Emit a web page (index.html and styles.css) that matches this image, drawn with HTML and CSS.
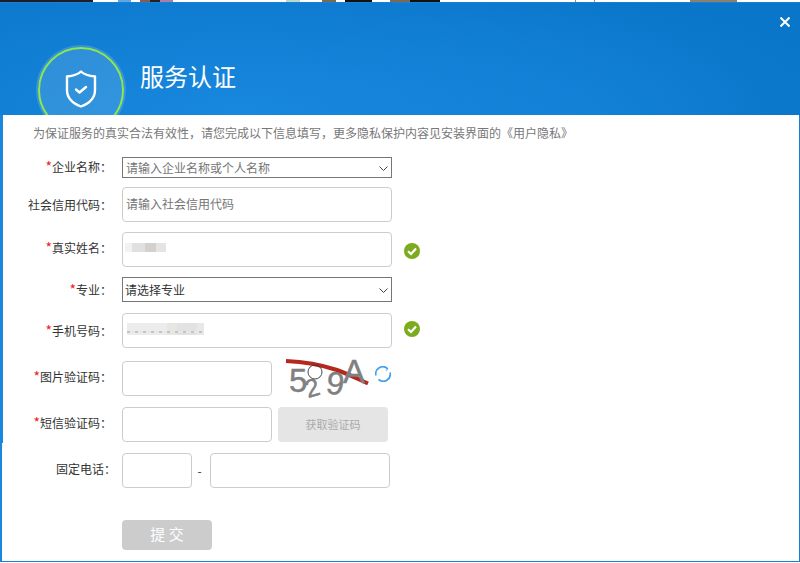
FILE: index.html
```html
<!DOCTYPE html>
<html lang="zh-CN">
<head>
<meta charset="utf-8">
<title>服务认证</title>
<link rel="stylesheet" href="styles.css">
</head>
<body>
<div class="strip"></div>
<main class="window">
  <header class="head">
    <div class="badge">
      <svg class="shield" viewBox="0 0 34 40" width="34" height="40" aria-hidden="true">
        <path d="M17 2.500 C14 5.500 9 7 3 7.500 V21 C3 29 9 34.500 17 37.500 C25 34.500 31 29 31 21 V7.500 C25 7 20 5.500 17 2.500 Z" fill="none" stroke="#fff" stroke-width="2.400" stroke-linejoin="round"/>
        <path d="M12 20.500 L15.500 23.500 L22 18" fill="none" stroke="#fff" stroke-width="2.400" stroke-linecap="round" stroke-linejoin="round"/>
      </svg>
    </div>
    <h1 class="title">服务认证</h1>
    <svg class="close" viewBox="0 0 10 10" width="10" height="10" aria-hidden="true">
      <path d="M0.500 0.500 L9.500 9.500 M9.500 0.500 L0.500 9.500" stroke="#fff" stroke-width="2" fill="none"/>
    </svg>
  </header>
  <section class="content">
    <p class="intro">为保证服务的真实合法有效性，请您完成以下信息填写，更多隐私保护内容见安装界面的《用户隐私》</p>
    <form class="form">
      <div class="row gap-9">
        <label class="label up-1"><em>*</em>企业名称：</label>
        <div class="select-wrap">
          <select class="select select-short select-muted"><option>请输入企业名称或个人名称</option></select>
          <svg class="chevron" viewBox="0 0 9 5" width="9" height="5" aria-hidden="true"><path d="M0.500 0.500 L4.500 4.500 L8.500 0.500" fill="none" stroke="#444" stroke-width="1"/></svg>
        </div>
      </div>
      <div class="row">
        <label class="label">社会信用代码：</label>
        <input class="input wide input-raised" placeholder="请输入社会信用代码">
      </div>
      <div class="row">
        <label class="label up-2"><em>*</em>真实姓名：</label>
        <div class="field">
          <input class="input wide">
          <span class="blur blur-name"></span>
        </div>
        <svg class="ok ok-down" viewBox="0 0 16 16" width="16" height="16" aria-hidden="true"><circle cx="8" cy="8" r="8" fill="#7dab1f"/><path d="M4 8.200 L7 11 L12 5.500" fill="none" stroke="#fff" stroke-width="2.200"/></svg>
      </div>
      <div class="row gap-11">
        <label class="label"><em>*</em>专业：</label>
        <div class="select-wrap">
          <select class="select select-tall"><option>请选择专业</option></select>
          <svg class="chevron" viewBox="0 0 9 5" width="9" height="5" aria-hidden="true"><path d="M0.500 0.500 L4.500 4.500 L8.500 0.500" fill="none" stroke="#444" stroke-width="1"/></svg>
        </div>
      </div>
      <div class="row gap-13">
        <label class="label"><em>*</em>手机号码：</label>
        <div class="field">
          <input class="input wide">
          <span class="blur blur-phone"></span>
        </div>
        <svg class="ok ok-up" viewBox="0 0 16 16" width="16" height="16" aria-hidden="true"><circle cx="8" cy="8" r="8" fill="#7dab1f"/><path d="M4 8.200 L7 11 L12 5.500" fill="none" stroke="#fff" stroke-width="2.200"/></svg>
      </div>
      <div class="row gap-11">
        <label class="label up-3"><em>*</em>图片验证码：</label>
        <input class="input mid">
        <svg class="captcha" viewBox="0 0 82 41" width="82" height="41" aria-label="验证码图片">
          <path d="M0 3 C14 3.500 30 5 51 12 C62 16 72 21 82 25.500" fill="none" stroke="#b5281d" stroke-width="4"/>
          <text x="3" y="34" class="cap-char cap-5">5</text>
          <text x="0" y="0" class="cap-char cap-two" transform="translate(22 40) rotate(-16)">2</text>
          <text x="0" y="0" class="cap-char cap-nine" transform="translate(39 35) rotate(8)">9</text>
          <text x="0" y="0" class="cap-char cap-a" transform="translate(57 25)">A</text>
          <circle cx="29" cy="14" r="7" fill="none" stroke="#333" stroke-width="0.900"/>
        </svg>
        <svg class="refresh" viewBox="0 0 16 16" width="16" height="16" aria-hidden="true">
          <path d="M1 9.500 A7 7 0 0 1 12.500 2.600 M15 6.500 A7 7 0 0 1 3.500 13.400" fill="none" stroke="#3f9ff0" stroke-width="1.600"/>
          <path d="M10.500 0.800 L12.800 2.800 L11 4.800" fill="none" stroke="#3f9ff0" stroke-width="1"/>
        </svg>
      </div>
      <div class="row gap-11">
        <label class="label up-2"><em>*</em>短信验证码：</label>
        <input class="input mid">
        <button type="button" class="sms" disabled>获取验证码</button>
      </div>
      <div class="row gap-32">
        <label class="label label-shift up-3">固定电话：</label>
        <input class="input area">
        <span class="dash">-</span>
        <input class="input phone">
      </div>
      <div class="row">
        <span class="label"></span>
        <button type="button" class="submit" disabled>提 交</button>
      </div>
    </form>
  </section>
</main>
</body>
</html>
```

FILE: styles.css
```css
* { box-sizing: border-box; }
html, body { margin: 0; height: 563px; overflow: hidden; background: #fff; }
body { font-family: "Noto Sans CJK SC", "Liberation Sans", sans-serif; font-size: 12px; color: #333; }

.strip {
  height: 2px;
  background: linear-gradient(90deg,
    #1b1f28 0 93px, #fff 93px 118px, #5ba8e8 118px 131px, #fff 131px 140px,
    #8a5a50 140px 150px, #222 150px 160px, #a87fa8 160px 173px, #fff 173px 286px,
    #b8d8d0 286px 300px, #fff 300px 322px, #7a6a50 322px 336px, #fff 336px 345px,
    #111 345px 372px, #fff 372px 390px, #7a6a50 390px 410px, #111 410px 440px,
    #fff 440px 575px, #b08a60 575px 576px, #fff 576px 594px, #b08a60 594px 595px,
    #fff 595px 690px, #8a8070 690px 737px, #fff 737px);
}

.window {
  height: 560px;
  border-right: 1px solid #1a7fd0;
  border-bottom: 1px solid #1a7fd0;
  border-left: 2px solid #1a86dc;
  display: flex;
  flex-direction: column;
}

.head {
  position: relative;
  height: 113px;
  margin-left: -2px;
  margin-right: -1px;
  flex: none;
  overflow: hidden;
  display: flex;
  align-items: flex-start;
  padding: 44px 0 0 38px;
  border-top: 1px solid #1a80d6;
  background:
    radial-gradient(ellipse 520px 170px at 240px 113px, #1888de 0%, rgba(24, 136, 222, 0) 100%),
    radial-gradient(ellipse 300px 120px at 560px 113px, rgba(24, 136, 222, 0.45) 0%, rgba(24, 136, 222, 0) 100%),
    #0a76ca;
}

.badge {
  width: 86px;
  height: 86px;
  flex: none;
  border-radius: 50%;
  border: 2px solid #8ce84c;
  background: rgba(255, 255, 255, 0.13);
  box-shadow: 0 0 0 2px rgba(255, 255, 255, 0.16);
  display: flex;
  justify-content: center;
  padding-top: 20px;
}
.shield { display: block; }

.title {
  margin: 12px 0 0 16px;
  font-size: 24px;
  line-height: 34px;
  font-weight: 400;
  color: #fff;
}

.close { position: absolute; left: 780px; top: 14px; }

.content {
  flex: 1;
  background: linear-gradient(#1a8ae0, #1a8ae0) 0 0 / 1px 328px no-repeat, #fff;
}

.intro {
  margin: 0;
  padding: 9px 0 0 31px;
  height: 42px;
  font-size: 12px;
  line-height: 17px;
  color: #777;
}

.form { display: flex; flex-direction: column; }

.row { display: flex; align-items: center; margin-bottom: 10px; }
.gap-9 { margin-bottom: 9px; }
.gap-11 { margin-bottom: 11px; }
.gap-13 { margin-bottom: 13px; }
.gap-32 { margin-bottom: 32px; }

.label {
  width: 110px;
  flex: none;
  text-align: right;
  font-size: 12px;
  line-height: 17px;
  color: #333;
  white-space: nowrap;
}
.label em { font-style: normal; font-size: 14px; line-height: 14px; color: #f02020; }
.label-shift { width: 114px; margin-right: -4px; }
.up-1 { padding-bottom: 2px; }
.up-2 { padding-bottom: 4px; }
.up-3 { padding-bottom: 5px; }

.label + * { margin-left: 10px; }

.select-wrap { position: relative; width: 270px; }

.select {
  display: block;
  width: 270px;
  appearance: none;
  padding: 0 20px 0 2px;
  font-family: inherit;
  font-size: 12px;
  color: #333;
  background: #fff;
  border: 1px solid #767676;
  border-radius: 0;
  outline: none;
}
.select-short { height: 21px; line-height: 19px; }
.select-tall { height: 25px; line-height: 23px; }
.select-muted { color: #757575; padding-left: 3px; }

.chevron { position: absolute; left: 257px; top: 50%; margin-top: -2px; }

.input {
  display: block;
  height: 35px;
  padding: 0 3px;
  border: 1px solid #ccc;
  border-radius: 4px;
  background: #fff;
  font-family: inherit;
  font-size: 12px;
  color: #333;
  outline: none;
}
.input-raised { padding-bottom: 3px; }
.input::placeholder { color: #757575; opacity: 1; }
.wide { width: 270px; }
.mid { width: 150px; }
.area { width: 70px; }
.phone { width: 180px; }

.field { position: relative; }

.blur { position: absolute; display: block; }
.blur-name {
  left: 3px;
  top: 11px;
  width: 41px;
  height: 12px;
  background:
    linear-gradient(#fff, #fff) 0 9px / 100% 3px no-repeat,
    linear-gradient(90deg, #f2f2f2 0 7px, #e0e0e0 7px 20px, #d4d0ce 20px 31px, #e4e4e4 31px 41px);
}
.blur-phone {
  left: 5px;
  top: 10px;
  width: 77px;
  height: 12px;
  background:
    repeating-linear-gradient(90deg, #c4c4c4 0 3px, #e8e8e8 3px 8px) 0 8px / 100% 2px no-repeat,
    linear-gradient(90deg, #ececec 0 40px, #e8e6e0 40px 50px, #e2e2e2 50px 70px, #e8e8e8 70px 77px);
}

.ok { margin-left: 12px; flex: none; }
.ok-down { margin-top: 3px; }
.ok-up { margin-bottom: 3px; }

.captcha { margin: -3px 0 -3px 14px; flex: none; overflow: visible; }
.cap-char { font-family: "Liberation Sans", sans-serif; fill: #808080; stroke: #808080; stroke-width: 0.400; }
.cap-5 { font-size: 33px; }
.cap-two { font-size: 25px; }
.cap-nine { font-size: 32px; }
.cap-a { font-size: 33px; }

.refresh { margin-left: 7px; margin-top: -9px; flex: none; }

.sms {
  margin-left: 6px;
  width: 110px;
  height: 35px;
  border: 0;
  border-radius: 4px;
  background: #e5e5e5;
  color: #aaa;
  font-family: inherit;
  font-size: 11px;
  padding: 0 0 2px;
}

.dash { width: 18px; text-align: center; padding: 0 3px 0 0; flex: none; }

.submit {
  width: 90px;
  height: 30px;
  border: 0;
  border-radius: 4px;
  background: #ccc;
  color: #fff;
  font-family: inherit;
  font-size: 15px;
  line-height: 28px;
  padding: 0 0 2px;
}
```
